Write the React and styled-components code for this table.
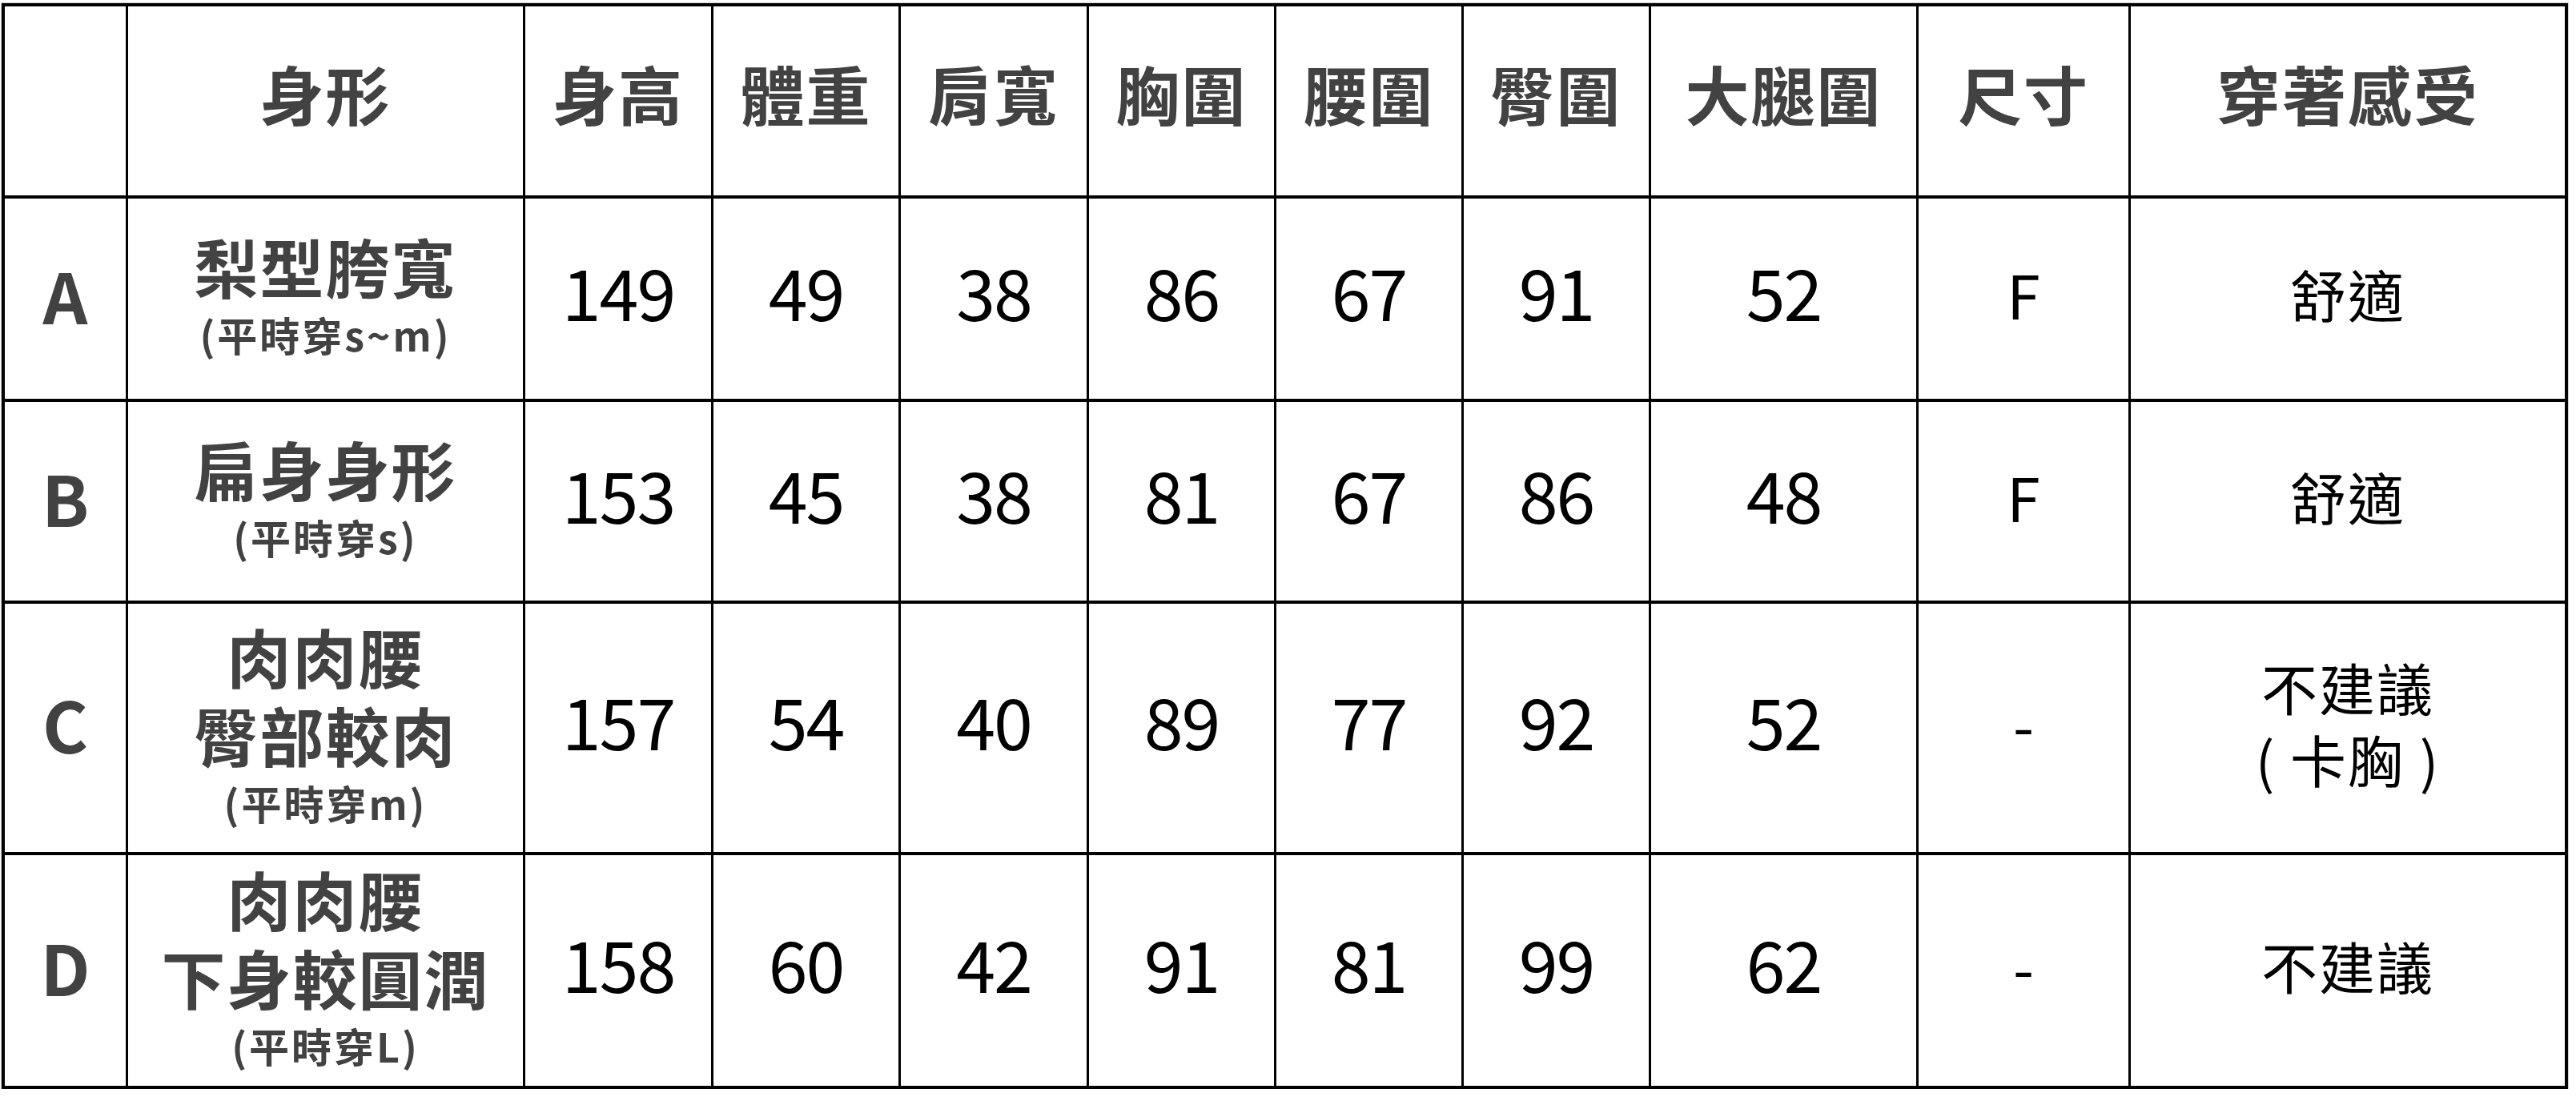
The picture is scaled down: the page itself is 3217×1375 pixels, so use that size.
import React from 'react';
import styled, {createGlobalStyle} from "styled-components";

const GlobalStyle = createGlobalStyle`
  html, body {
    margin: 0;
    padding: 0;
    background: #ffffff;
  }
  body {
    font-family: "Noto Sans CJK TC", "Noto Sans CJK SC", sans-serif;
  }
`;

const columns = [154, 496, 235, 234, 235, 234, 234, 234, 334, 265, 546];
const rowHeights = [240, 254, 252, 314, 292];

const Table = styled.div`
  display: grid;
  grid-template-columns: ${columns.map(w => w + 'px').join(' ')};
  grid-template-rows: ${rowHeights.map(h => h + 'px').join(' ')};
  margin: 4px 0 0 2px;
  width: max-content;
  border-top: 4px solid #000;
  border-left: 4px solid #000;
  outline: 1px solid #d0d0d0;
`;

const Cell = styled.div`
  box-sizing: border-box;
  display: flex;
  flex-direction: column;
  align-items: center;
  justify-content: center;
  text-align: center;
  padding-bottom: ${({$lift}) => $lift ?? 18}px;
  border-right: ${({$last}) => $last ? 4 : 3}px solid #000;
  border-bottom: 4px solid #000;
  background: #fff;
`;

const HeadText = styled.span`
  font-size: 80px;
  font-weight: 700;
  color: #424242;
  letter-spacing: 2px;
  line-height: 1;
`;

const Letter = styled.span`
  font-size: 87px;
  font-weight: 700;
  color: #424242;
  line-height: 1;
`;

const ShapeName = styled.span`
  display: block;
  font-size: 80px;
  font-weight: 700;
  color: #424242;
  letter-spacing: 2px;
  line-height: 98px;
  white-space: nowrap;
`;

const ShapeNote = styled.span`
  display: block;
  margin-top: 7px;
  font-size: 50px;
  font-weight: 700;
  color: #424242;
  letter-spacing: 3px;
  line-height: 60px;
  white-space: nowrap;
`;

const Num = styled.span`
  font-size: 88px;
  font-weight: 400;
  color: #000;
  letter-spacing: -2px;
  line-height: 1;
`;

const Size = styled.span`
  font-size: 75px;
  font-weight: 400;
  color: #000;
  line-height: 1;
`;

const Feel = styled.span`
  display: block;
  font-size: 70px;
  font-weight: 400;
  color: #000;
  letter-spacing: 2px;
  line-height: 90px;
  white-space: pre;
`;

const headers = ['', '身形', '身高', '體重', '肩寬', '胸圍', '腰圍', '臀圍', '大腿圍', '尺寸', '穿著感受'];

const rows = [
    {id: 'A', name: ['梨型胯寬'], note: '(平時穿s~m)', nums: [149, 49, 38, 86, 67, 91, 52], size: 'F', feel: ['舒適']},
    {id: 'B', name: ['扁身身形'], note: '(平時穿s)', nums: [153, 45, 38, 81, 67, 86, 48], size: 'F', feel: ['舒適']},
    {id: 'C', name: ['肉肉腰', '臀部較肉'], note: '(平時穿m)', nums: [157, 54, 40, 89, 77, 92, 52], size: '-', feel: ['不建議', '( 卡胸 )']},
    {id: 'D', name: ['肉肉腰', '下身較圓潤'], note: '(平時穿L)', nums: [158, 60, 42, 91, 81, 99, 62], size: '-', feel: ['不建議']},
];

const App = () => {
    return (
        <>
            <GlobalStyle/>
            <Table>
                {headers.map((h, i) => (
                    <Cell key={'h' + i} $lift={22} $last={i === headers.length - 1}>
                        <HeadText>{h}</HeadText>
                    </Cell>
                ))}
                {rows.map(row => (
                    <React.Fragment key={row.id}>
                        <Cell $lift={12}>
                            <Letter>{row.id}</Letter>
                        </Cell>
                        <Cell>
                            {row.name.map(line => <ShapeName key={line}>{line}</ShapeName>)}
                            <ShapeNote>{row.note}</ShapeNote>
                        </Cell>
                        {row.nums.map((n, i) => (
                            <Cell key={i} $lift={20}>
                                <Num>{n}</Num>
                            </Cell>
                        ))}
                        <Cell $lift={14}>
                            <Size>{row.size}</Size>
                        </Cell>
                        <Cell $last $lift={12}>
                            {row.feel.map(line => <Feel key={line}>{line}</Feel>)}
                        </Cell>
                    </React.Fragment>
                ))}
            </Table>
        </>
    );
};

export default App;
